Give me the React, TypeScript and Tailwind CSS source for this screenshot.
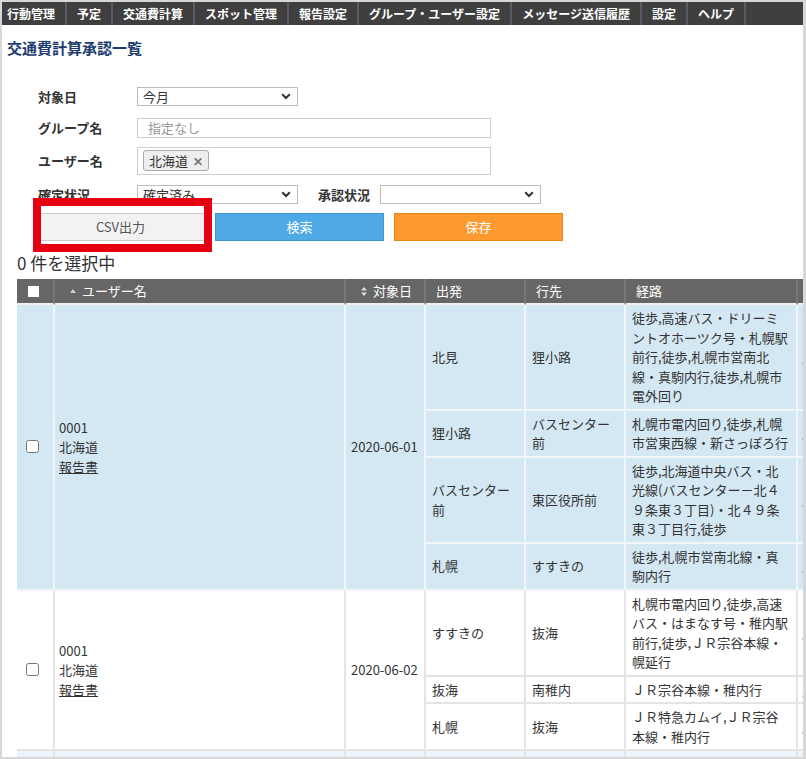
const NAV = ['行動管理', '予定', '交通費計算', 'スポット管理', '報告設定', 'グループ・ユーザー設定', 'メッセージ送信履歴', '設定', 'ヘルプ']

type Leg = { from: string[]; to: string[]; route: string[] }
type Group = { date: string; bg: string; line: string; legs: Leg[] }

const GROUPS: Group[] = [
  {
    date: '2020-06-01',
    bg: 'bg-[#d4e8f3]',
    line: 'border-[#f2f5f7]',
    legs: [
      {
        from: ['北見'],
        to: ['狸小路'],
        route: ['徒歩,高速バス・ドリーミ', 'ントオホーツク号・札幌駅', '前行,徒歩,札幌市営南北', '線・真駒内行,徒歩,札幌市', '電外回り'],
      },
      { from: ['狸小路'], to: ['バスセンター', '前'], route: ['札幌市電内回り,徒歩,札幌', '市営東西線・新さっぽろ行'] },
      {
        from: ['バスセンター', '前'],
        to: ['東区役所前'],
        route: ['徒歩,北海道中央バス・北', '光線(バスセンター－北４', '９条東３丁目)・北４９条', '東３丁目行,徒歩'],
      },
      { from: ['札幌'], to: ['すすきの'], route: ['徒歩,札幌市営南北線・真', '駒内行'] },
    ],
  },
  {
    date: '2020-06-02',
    bg: 'bg-white',
    line: 'border-[#e4e4e4]',
    legs: [
      {
        from: ['すすきの'],
        to: ['抜海'],
        route: ['札幌市電内回り,徒歩,高速', 'バス・はまなす号・稚内駅', '前行,徒歩,ＪＲ宗谷本線・', '幌延行'],
      },
      { from: ['抜海'], to: ['南稚内'], route: ['ＪＲ宗谷本線・稚内行'] },
      { from: ['札幌'], to: ['抜海'], route: ['ＪＲ特急カムイ,ＪＲ宗谷', '本線・稚内行'] },
    ],
  },
  {
    date: '2020-06-03',
    bg: 'bg-[#ecf3fc]',
    line: 'border-[#e4e4e4]',
    legs: [
      { from: ['抜海'], to: ['札幌'], route: ['ＪＲ宗谷本線・札幌行'] },
      { from: ['札幌'], to: ['北見'], route: ['徒歩,高速バス・ドリーミ', 'ントオホーツク号・北見'] },
    ],
  },
]

function Chevron() {
  return (
    <svg width="10" height="7" viewBox="0 0 10 7" className="shrink-0">
      <path d="M1.2 1.2 5 5 8.8 1.2" fill="none" stroke="#333" strokeWidth="2" />
    </svg>
  )
}

function Select({ value, width }: { value: string; width: string }) {
  return (
    <div className={`${width} h-[19px] border border-[#bdbdbd] bg-white flex items-center justify-between pl-[5px] pr-[6px]`}>
      <span className="text-[13px] leading-none text-[#333]">{value}</span>
      <Chevron />
    </div>
  )
}

function Lines({ lines }: { lines: string[] }) {
  return (
    <>
      {lines.map((l, i) => (
        <div key={i} className="whitespace-nowrap">
          {l}
        </div>
      ))}
    </>
  )
}

export default function App() {
  const cell = 'align-middle text-[13px] leading-[19.5px] text-[#333] py-[3px] border-r-2 border-b-2'
  const head = 'bg-[#666] border-r-2 border-b-2 border-r-[#777] border-b-[#f0f0f0] text-left align-middle font-normal text-[13px] text-white whitespace-nowrap'

  return (
    <div className="relative w-[806px] h-[759px] overflow-hidden bg-white border-t-2 border-l-2 border-b-2 border-r-[3px] border-[#d7d7d7] font-['Noto_Sans_CJK_JP','Noto_Sans',sans-serif] text-[#333]">
      <nav className="flex h-[23px] bg-[#3f3f3f]">
        {NAV.map((n, i) => (
          <div
            key={n}
            className={`${i === 0 ? 'pl-[5px]' : 'pl-[10px]'} pr-[10px] border-r-2 border-[#5a5866] text-[12px] font-bold leading-[23px] text-white whitespace-nowrap`}
          >
            {n}
          </div>
        ))}
      </nav>

      <h1 className="mt-[13px] pl-[5px] text-[15px] font-bold leading-[20px] text-[#1d3c6e]">交通費計算承認一覧</h1>

      <div className="mt-[29px] pl-[36px] flex flex-col">
        <div className="flex items-center">
          <div className="w-[99px] text-[13px] font-bold">対象日</div>
          <Select value="今月" width="w-[161px]" />
        </div>
        <div className="flex items-center mt-[11px]">
          <div className="w-[99px] text-[13px] font-bold">グループ名</div>
          <div className="w-[354px] h-[20px] border border-[#cfcfcf] flex items-center pl-[10px] text-[13px] text-[#999]">指定なし</div>
        </div>
        <div className="flex items-center mt-[9px]">
          <div className="w-[99px] text-[13px] font-bold">ユーザー名</div>
          <div className="w-[354px] h-[28px] border border-[#cfcfcf] flex items-center pl-[5px]">
            <span className="h-[21px] flex items-center gap-[5px] px-[5px] border border-[#aaa] rounded-[3px] bg-[#eeeeee] text-[13px] text-[#333]">
              北海道
              <span className="text-[12px] font-bold text-[#777]">✕</span>
            </span>
          </div>
        </div>
        <div className="flex items-center mt-[10px]">
          <div className="w-[99px] text-[13px] font-bold">確定状況</div>
          <Select value="確定済み" width="w-[161px]" />
          <div className="ml-[20px] w-[62px] text-[13px] font-bold">承認状況</div>
          <Select value="" width="w-[161px]" />
        </div>
        <div className="flex mt-[9px] gap-[10px] -ml-[2px]">
          <button className="w-[169px] h-[28px] border border-[#cccccc] bg-[#f2f2f2] text-[13px] text-[#555]">CSV出力</button>
          <button className="w-[169px] h-[28px] border border-[#3b96d2] bg-[#4fa9e4] text-[13px] text-white">検索</button>
          <button className="w-[169px] h-[28px] border border-[#e2841c] bg-[#fd9a2f] text-[13px] text-white">保存</button>
        </div>
      </div>

      <div className="mt-[11px] ml-[15px] text-[17px] leading-[22px] text-[#333]">0 件を選択中</div>

      <table className="mt-[5px] ml-[15px] w-[861px] table-fixed border-separate border-spacing-0">
        <colgroup>
          <col className="w-[38px]" />
          <col className="w-[291px]" />
          <col className="w-[80px]" />
          <col className="w-[100px]" />
          <col className="w-[100px]" />
          <col className="w-[172px]" />
          <col className="w-[80px]" />
        </colgroup>
        <thead>
          <tr className="h-[26px]">
            <th className={`${head} pl-[11px]`}>
              <div className="w-[11px] h-[11px] bg-white" />
            </th>
            <th className={`${head} pl-[15px]`}>
              <div className="flex items-center gap-[6px]">
                <svg width="6" height="4" viewBox="0 0 6 4">
                  <path d="M0 4 3 0 6 4Z" fill="#cfcfcf" />
                </svg>
                ユーザー名
              </div>
            </th>
            <th className={`${head} pl-[15px]`}>
              <div className="flex items-center gap-[6px]">
                <svg width="6" height="9" viewBox="0 0 6 9">
                  <path d="M0 3.5 3 0 6 3.5Z M0 5.5 3 9 6 5.5Z" fill="#dcdcdc" />
                </svg>
                対象日
              </div>
            </th>
            {['出発', '行先', '経路', '金額'].map(h => (
              <th key={h} className={`${head} px-[10px]`}>
                {h}
              </th>
            ))}
          </tr>
        </thead>
        <tbody>
          {GROUPS.map(g =>
            g.legs.map((leg, i) => (
              <tr key={g.date + i}>
                {i === 0 && (
                  <>
                    <td rowSpan={g.legs.length} className={`${cell} ${g.bg} ${g.line} pl-[9px]`}>
                      <input type="checkbox" className="m-0 block w-[13px] h-[13px]" />
                    </td>
                    <td rowSpan={g.legs.length} className={`${cell} ${g.bg} ${g.line} pl-[4px]`}>
                      <div>0001</div>
                      <div>北海道</div>
                      <div className="underline">報告書</div>
                    </td>
                    <td rowSpan={g.legs.length} className={`${cell} ${g.bg} ${g.line} pl-[5px] whitespace-nowrap`}>
                      {g.date}
                    </td>
                  </>
                )}
                <td className={`${cell} ${g.bg} ${g.line} px-[6px]`}>
                  <Lines lines={leg.from} />
                </td>
                <td className={`${cell} ${g.bg} ${g.line} px-[6px]`}>
                  <Lines lines={leg.to} />
                </td>
                <td className={`${cell} ${g.bg} ${g.line} px-[6px]`}>
                  <Lines lines={leg.route} />
                </td>
                <td className={`${cell} ${g.bg} ${g.line} pl-[4px] whitespace-nowrap`}>片道</td>
              </tr>
            ))
          )}
        </tbody>
      </table>

      <div className="absolute left-[31px] top-[196px] w-[179px] h-[54px] border-[8px] border-[#e50012] pointer-events-none" />
    </div>
  )
}
